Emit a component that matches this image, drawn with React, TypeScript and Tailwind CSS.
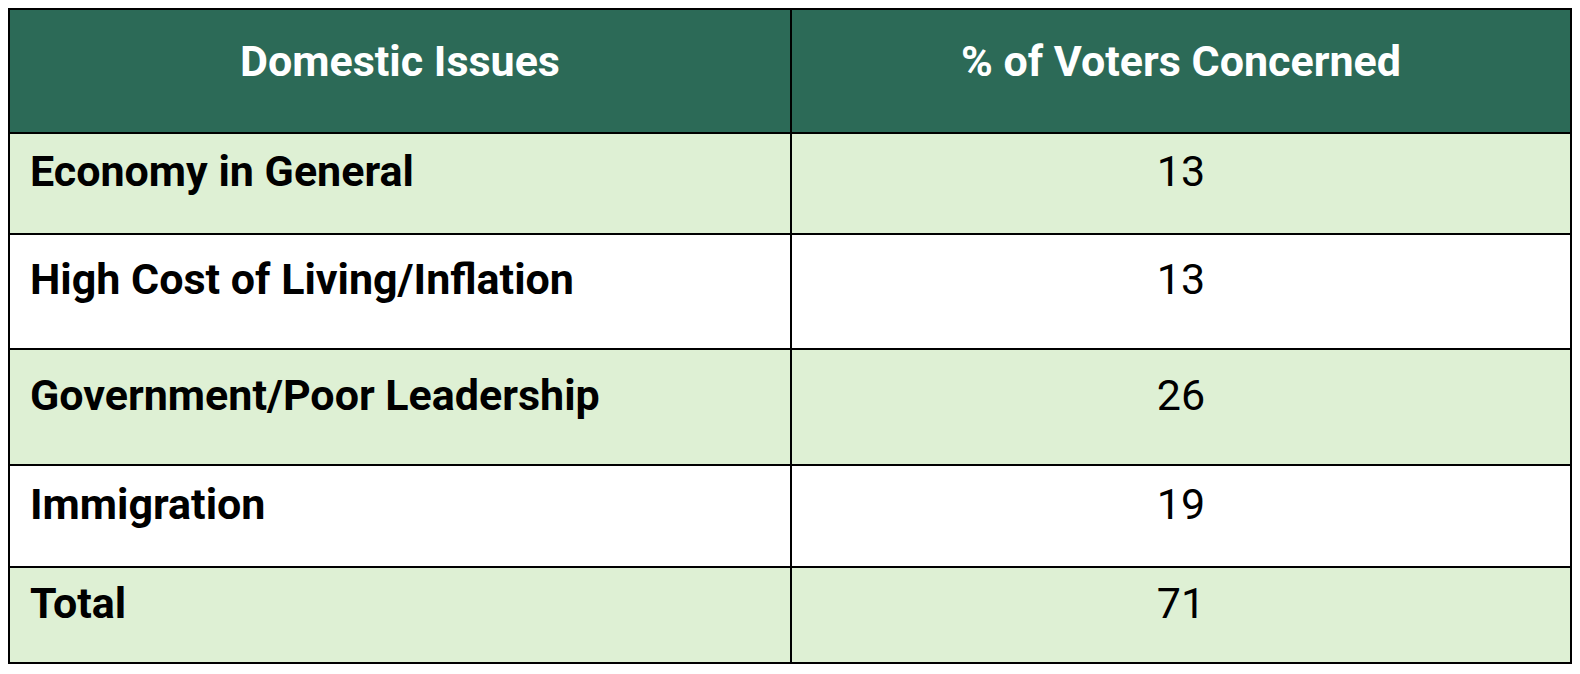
const rows = [
  { label: "Economy in General", value: "13", shaded: true, height: "h-[101px]" },
  { label: "High Cost of Living/Inflation", value: "13", shaded: false, height: "h-[115px]" },
  { label: "Government/Poor Leadership", value: "26", shaded: true, height: "h-[116px]" },
  { label: "Immigration", value: "19", shaded: false, height: "h-[102px]" },
  { label: "Total", value: "71", shaded: true, height: "h-[96px]" },
];

export default function App() {
  return (
    <div className="min-h-screen bg-white p-2 font-['Roboto',sans-serif] text-[43px] leading-[1.17] text-black">
      <div className="w-[1564px] border-2 border-black">
        <div className="grid h-[122px] grid-cols-[780px_780px] bg-[#2c6a57] font-bold text-white">
          <div className="flex items-center justify-center pb-[20px]">Domestic Issues</div>
          <div className="flex items-center justify-center border-l-2 border-black pb-[20px]">
            % of Voters Concerned
          </div>
        </div>
        {rows.map((row) => (
          <div
            key={row.label}
            className={`grid grid-cols-[780px_780px] border-t-2 border-black ${row.height} ${
              row.shaded ? "bg-[#def0d4]" : "bg-white"
            }`}
          >
            <div className="flex items-center pb-[24px] pl-5 font-bold">{row.label}</div>
            <div className="flex items-center justify-center border-l-2 border-black pb-[24px]">{row.value}</div>
          </div>
        ))}
      </div>
    </div>
  );
}
